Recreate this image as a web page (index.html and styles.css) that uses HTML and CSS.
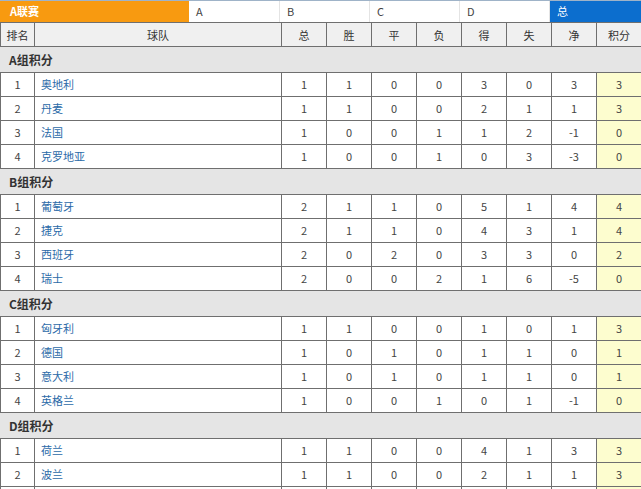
FILE: index.html
```html
<!DOCTYPE html>
<html lang="zh">
<head>
<meta charset="utf-8">
<link rel="stylesheet" href="styles.css">
</head>
<body>
<div class="tabs">
  <div class="tab tab-league">A联赛</div>
  <div class="tab tab-a">A</div>
  <div class="tab">B</div>
  <div class="tab">C</div>
  <div class="tab">D</div>
  <div class="tab tab-total">总</div>
</div>
<table class="standings">
  <colgroup>
    <col class="c-rank"><col class="c-team"><col class="c-num"><col class="c-num"><col class="c-num"><col class="c-num"><col class="c-num"><col class="c-num"><col class="c-num"><col class="c-pts">
  </colgroup>
  <thead>
    <tr class="head"><th>排名</th><th>球队</th><th>总</th><th>胜</th><th>平</th><th>负</th><th>得</th><th>失</th><th>净</th><th>积分</th></tr>
  </thead>
  <tbody>
    <tr class="group"><td colspan="10">A组积分</td></tr>
    <tr><td>1</td><td class="team">奥地利</td><td>1</td><td>1</td><td>0</td><td>0</td><td>3</td><td>0</td><td>3</td><td class="pts">3</td></tr>
    <tr><td>2</td><td class="team">丹麦</td><td>1</td><td>1</td><td>0</td><td>0</td><td>2</td><td>1</td><td>1</td><td class="pts">3</td></tr>
    <tr><td>3</td><td class="team">法国</td><td>1</td><td>0</td><td>0</td><td>1</td><td>1</td><td>2</td><td>-1</td><td class="pts">0</td></tr>
    <tr><td>4</td><td class="team">克罗地亚</td><td>1</td><td>0</td><td>0</td><td>1</td><td>0</td><td>3</td><td>-3</td><td class="pts">0</td></tr>
    <tr class="group"><td colspan="10">B组积分</td></tr>
    <tr><td>1</td><td class="team">葡萄牙</td><td>2</td><td>1</td><td>1</td><td>0</td><td>5</td><td>1</td><td>4</td><td class="pts">4</td></tr>
    <tr><td>2</td><td class="team">捷克</td><td>2</td><td>1</td><td>1</td><td>0</td><td>4</td><td>3</td><td>1</td><td class="pts">4</td></tr>
    <tr><td>3</td><td class="team">西班牙</td><td>2</td><td>0</td><td>2</td><td>0</td><td>3</td><td>3</td><td>0</td><td class="pts">2</td></tr>
    <tr><td>4</td><td class="team">瑞士</td><td>2</td><td>0</td><td>0</td><td>2</td><td>1</td><td>6</td><td>-5</td><td class="pts">0</td></tr>
    <tr class="group"><td colspan="10">C组积分</td></tr>
    <tr><td>1</td><td class="team">匈牙利</td><td>1</td><td>1</td><td>0</td><td>0</td><td>1</td><td>0</td><td>1</td><td class="pts">3</td></tr>
    <tr><td>2</td><td class="team">德国</td><td>1</td><td>0</td><td>1</td><td>0</td><td>1</td><td>1</td><td>0</td><td class="pts">1</td></tr>
    <tr><td>3</td><td class="team">意大利</td><td>1</td><td>0</td><td>1</td><td>0</td><td>1</td><td>1</td><td>0</td><td class="pts">1</td></tr>
    <tr><td>4</td><td class="team">英格兰</td><td>1</td><td>0</td><td>0</td><td>1</td><td>0</td><td>1</td><td>-1</td><td class="pts">0</td></tr>
    <tr class="group"><td colspan="10">D组积分</td></tr>
    <tr><td>1</td><td class="team">荷兰</td><td>1</td><td>1</td><td>0</td><td>0</td><td>4</td><td>1</td><td>3</td><td class="pts">3</td></tr>
    <tr><td>2</td><td class="team">波兰</td><td>1</td><td>1</td><td>0</td><td>0</td><td>2</td><td>1</td><td>1</td><td class="pts">3</td></tr>
    <tr class="tail"><td></td><td></td><td></td><td></td><td></td><td></td><td></td><td></td><td></td><td class="pts"></td></tr>
  </tbody>
</table>
</body>
</html>
```
FILE: styles.css
```css
html, body {
  margin: 0;
  padding: 0;
  background: #ffffff;
  font-family: "Noto Sans CJK SC", "Noto Sans", sans-serif;
  color: #333333;
}
body {
  width: 641px;
  overflow: hidden;
}
.tabs {
  display: flex;
  height: 22px;
  box-sizing: border-box;
  border-top: 1px solid #9fb3c8;
}
.tab {
  box-sizing: border-box;
  width: 90px;
  padding-left: 7px;
  font-size: 11px;
  line-height: 21px;
  color: #444444;
  border-right: 1px solid #e4e4e4;
}
.tab-league {
  width: 189px;
  padding-left: 10px;
  background: #f89a10;
  color: #ffffff;
  font-weight: bold;
  border-right: none;
}
.tab-a { width: 91px; }
.tab-total {
  width: 91px;
  background: #0c6ece;
  color: #ffffff;
  border-right: none;
}
.standings {
  width: 641px;
  table-layout: fixed;
  border-collapse: collapse;
  font-size: 11px;
}
.c-rank { width: 34px; }
.c-team { width: 247px; }
.c-num { width: 45px; }
.c-pts { width: 45px; }
.standings th,
.standings td {
  border: 1px solid #6f6f6f;
  padding: 0;
  text-align: center;
  font-weight: normal;
  color: #444444;
}
.head th {
  height: 23px;
  background: #f0f0f0;
  color: #333333;
}
.standings tbody tr td {
  height: 21px;
  padding-bottom: 2px;
}
.standings tbody tr.group td {
  height: 24px;
  padding-bottom: 1px;
  background: #e5e5e5;
  text-align: left;
  padding-left: 8px;
  font-size: 12px;
  font-weight: bold;
  color: #333333;
  border-left-color: #e5e5e5;
  border-right-color: #e5e5e5;
}
.standings td.team {
  text-align: left;
  padding-left: 6px;
  color: #2b6aa8;
}
.standings td.pts {
  background: #fdfdcf;
}
```
